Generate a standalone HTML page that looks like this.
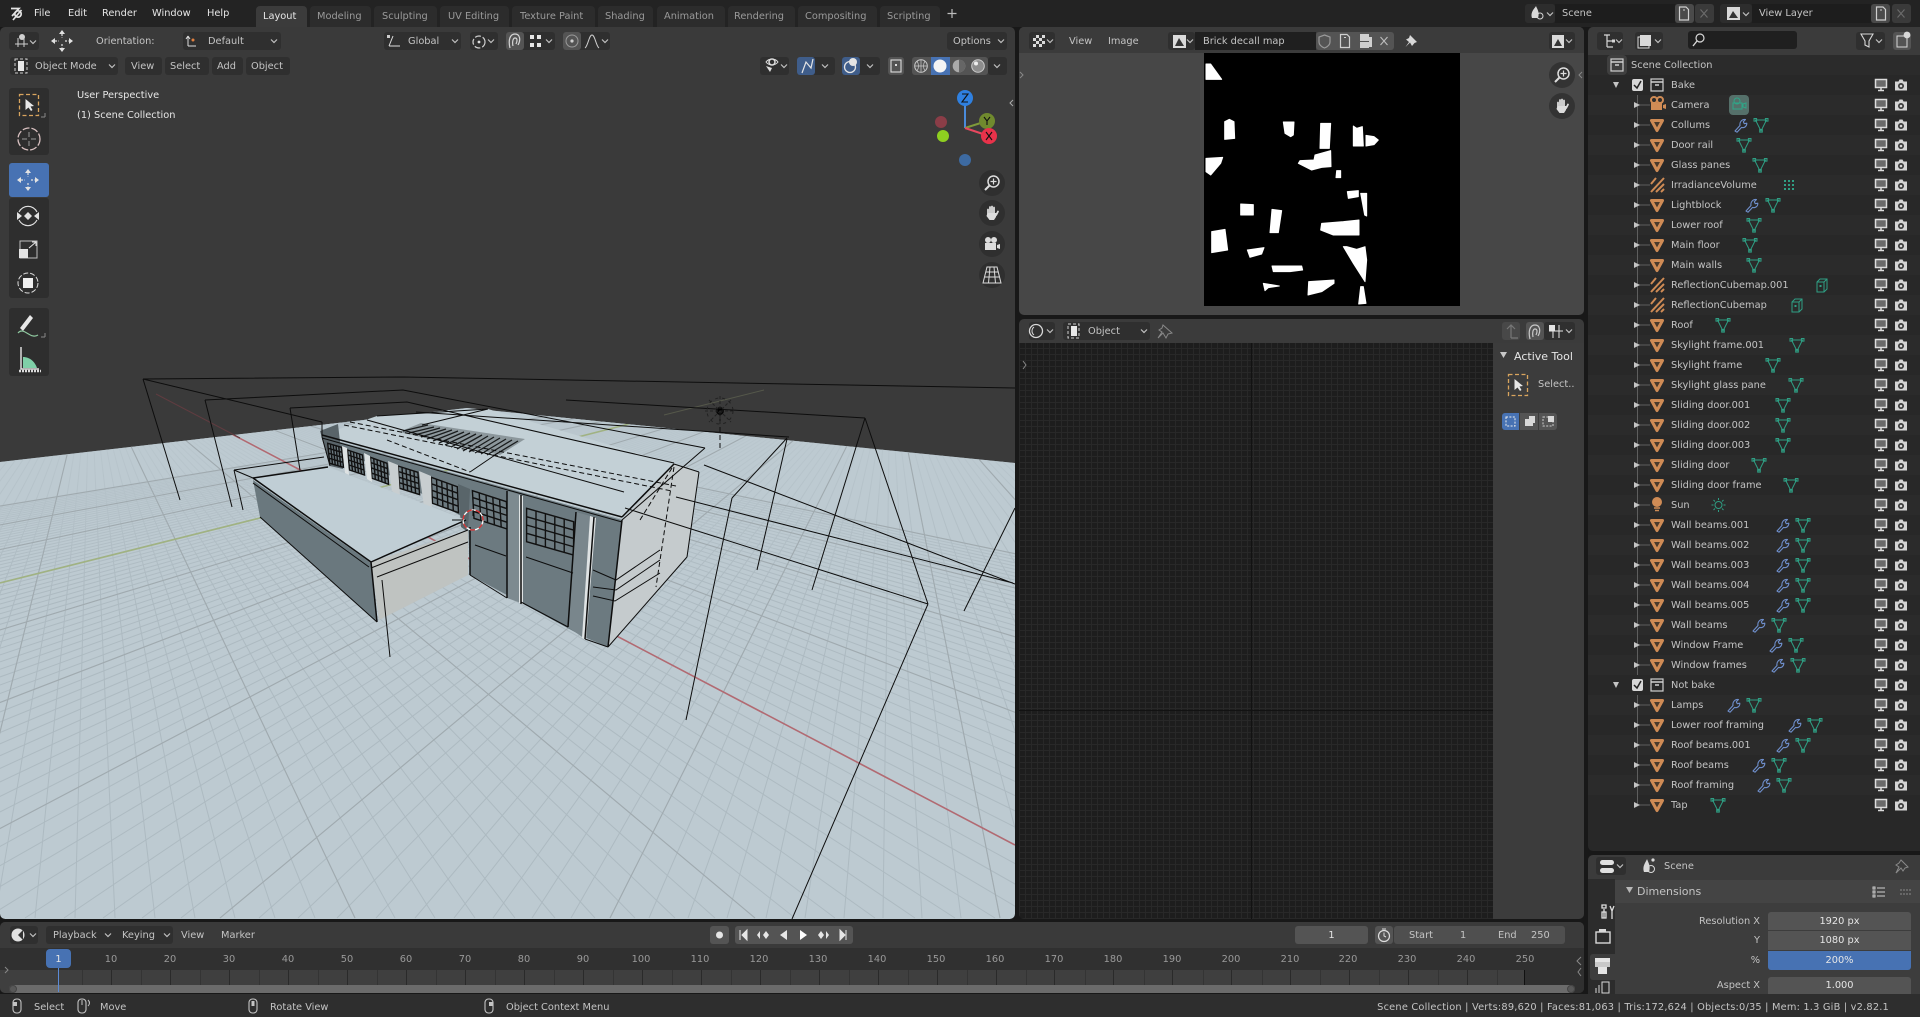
<!DOCTYPE html>
<html lang="en"><head><meta charset="utf-8"><title>Blender</title>
<style>
html,body{margin:0;padding:0;background:#181818;width:1920px;height:1017px;overflow:hidden}
.a{position:absolute}
.t{position:absolute;white-space:nowrap;font:9.8px/14px "DejaVu Sans","Liberation Sans",sans-serif;color:#c4c4c4;margin-top:1px}
.w{color:#e6e6e6}
.d{color:#9a9a9a}
.b{position:absolute;background:#2f2f2f;border-radius:3px}
.f{position:absolute;background:#545454;border-radius:3px}
.tab{position:absolute;top:6px;height:21px;background:#2c2c2c;border-radius:4px 4px 0 0}
.c{text-align:center}
.r{text-align:right}
svg{position:absolute;left:0;top:0;overflow:hidden}
</style></head>
<body>
<div class="a" style="left:0;top:0;width:1920px;height:27px;background:#232323"></div>

<!-- areas -->
<div class="a" style="left:0;top:27px;width:1015px;height:892px;background:#3a3a3a;border-radius:5px"></div>
<div class="a" style="left:1019px;top:27px;width:565px;height:288px;background:#474747;border-radius:5px"></div>
<div class="a" style="left:1019px;top:27px;width:565px;height:26px;background:#3b3b3b;border-radius:5px 5px 0 0"></div>
<div class="a" style="left:1019px;top:319px;width:565px;height:600px;background:#1d1d1d;border-radius:5px;overflow:hidden">
  <div class="a" style="left:0;top:24px;width:474px;height:576px;background-color:#1d1d1d;background-image:repeating-linear-gradient(90deg,#282828 0 1px,transparent 1px 6px),repeating-linear-gradient(0deg,#282828 0 1px,transparent 1px 6px)"></div>
  <div class="a" style="left:232px;top:24px;width:1px;height:576px;background:#121212"></div>
  <div class="a" style="left:0;top:391px;width:474px;height:1px;background:#121212"></div>
  <div class="a" style="left:474px;top:24px;width:91px;height:576px;background:#3c3c3c"></div>
  <div class="a" style="left:0;top:0;width:565px;height:24px;background:#3b3b3b"></div>
</div>
<div class="a" style="left:1588px;top:27px;width:332px;height:824px;background:#282828;border-radius:5px 0 0 5px;overflow:hidden">
  <div class="a" style="left:0;top:0;width:332px;height:28px;background:#3b3b3b"></div>
  <div class="a" style="left:0;top:28px;width:332px;height:760px;background:repeating-linear-gradient(180deg,#2b2b2b 0 20px,#282828 20px 40px)"></div>
</div>
<div class="a" style="left:1588px;top:855px;width:332px;height:139px;background:#3b3b3b;border-radius:5px 0 0 0;overflow:hidden">
  <div class="a" style="left:0;top:24px;width:27px;height:115px;background:#2c2c2c"></div>
  <div class="a" style="left:27px;top:25px;width:305px;height:23px;background:#444"></div>
  <div class="a" style="left:27px;top:48px;width:305px;height:91px;background:#3d3d3d"></div>
</div>
<div class="a" style="left:0;top:922px;width:1584px;height:71px;background:#2f2f2f;border-radius:5px;overflow:hidden">
  <div class="a" style="left:0;top:0;width:1584px;height:26px;background:#3a3a3a"></div>
  <div class="a" style="left:0;top:26px;width:1584px;height:22px;background:#303030"></div>
  <div class="a" style="left:0;top:48px;width:1584px;height:23px;background:#3f3f3f"></div>
  <div class="a" style="left:1524px;top:48px;width:60px;height:23px;background:#303030"></div>
  <div class="a" style="left:9px;top:63px;width:1566px;height:8px;background:#6b6b6b;border-radius:4px"></div>
</div>
<div class="a" style="left:0;top:994px;width:1920px;height:23px;background:#2e2e2e"></div>

<!-- 3D viewport scene -->
<svg width="1015" height="919" viewBox="0 0 1015 919" style="border-radius:0 0 5px 5px">
<defs>
<clipPath id="vp"><rect x="0" y="27" width="1015" height="892" rx="5"/></clipPath>
<clipPath id="fl"><polygon points="0,462 467,408 1015,463 1015,919 0,919"/></clipPath>
<linearGradient id="fade" x1="0" y1="440" x2="0" y2="590" gradientUnits="userSpaceOnUse"><stop offset="0" stop-color="#bdcad1" stop-opacity=".75"/><stop offset="1" stop-color="#bdcad1" stop-opacity="0"/></linearGradient>
<g id="win"><rect x="0" y="0" width="1" height="1" fill="#6c7a80"/><path d="M0 0H1V1H0ZM.2 0V1M.4 0V1M.6 0V1M.8 0V1M0 .25H1M0 .5H1M0 .75H1" fill="none" stroke="#111" stroke-width="1.4" vector-effect="non-scaling-stroke"/></g>
</defs>
<g clip-path="url(#vp)">
<path d="M664 415L764 390" stroke="#55584a" stroke-width="1" fill="none"/>
<polygon points="0,462 467,408 1015,463 1015,919 0,919" fill="#bdcad1"/>
<g clip-path="url(#fl)" fill="none">
<path stroke="#adbac1" stroke-width="1" d="M90 360L-445 918M90 360L-405 918M90 360L-365 918M90 360L-325 918M90 360L-285 918M90 360L-245 918M90 360L-205 918M90 360L-165 918M90 360L-125 918M90 360L-85 918M90 360L-45 918M90 360L-5 918M90 360L35 918M90 360L75 918M90 360L115 918M90 360L155 918M90 360L195 918M90 360L235 918M90 360L275 918M90 360L315 918M90 360L355 918M90 360L395 918M90 360L435 918M90 360L475 918M90 360L515 918M90 360L555 918M90 360L595 918M90 360L635 918M90 360L675 918M90 360L715 918M90 360L755 918M90 360L795 918M90 360L835 918M90 360L875 918M90 360L915 918M90 360L955 918M90 360L995 918M90 360L1035 918M90 360L1075 918M90 360L1115 918M90 360L1155 918M90 360L1195 918M90 360L1235 918M90 360L1275 918M90 360L1315 918M90 360L1355 918M90 360L1395 918M90 360L1435 918M90 360L1475 918M90 360L1515 918M90 360L1555 918M90 360L1595 918M90 360L1635 918M90 360L1675 918M90 360L1715 918M90 360L1755 918M90 360L1795 918M90 360L1835 918M90 360L1875 918M90 360L1915 918M90 360L1955 918M90 360L1995 918M90 360L2035 918M90 360L2075 918M90 360L2115 918M90 360L2155 918M90 360L2195 918M90 360L2235 918M90 360L2275 918M90 360L2315 918M90 360L2355 918M90 360L2395 918M90 360L2435 918M90 360L2475 918M90 360L2515 918M90 360L2555 918M90 360L2595 918M90 360L2635 918M90 360L2675 918M90 360L2715 918M90 360L2755 918"/>
<path stroke="#adbac1" stroke-width="1" d="M890 360L-2510 918M890 360L-2471 918M890 360L-2432 918M890 360L-2393 918M890 360L-2354 918M890 360L-2315 918M890 360L-2276 918M890 360L-2237 918M890 360L-2198 918M890 360L-2159 918M890 360L-2120 918M890 360L-2081 918M890 360L-2042 918M890 360L-2003 918M890 360L-1964 918M890 360L-1925 918M890 360L-1886 918M890 360L-1847 918M890 360L-1808 918M890 360L-1769 918M890 360L-1730 918M890 360L-1691 918M890 360L-1652 918M890 360L-1613 918M890 360L-1574 918M890 360L-1535 918M890 360L-1496 918M890 360L-1457 918M890 360L-1418 918M890 360L-1379 918M890 360L-1340 918M890 360L-1301 918M890 360L-1262 918M890 360L-1223 918M890 360L-1184 918M890 360L-1145 918M890 360L-1106 918M890 360L-1067 918M890 360L-1028 918M890 360L-989 918M890 360L-950 918M890 360L-911 918M890 360L-872 918M890 360L-833 918M890 360L-794 918M890 360L-755 918M890 360L-716 918M890 360L-677 918M890 360L-638 918M890 360L-599 918M890 360L-560 918M890 360L-521 918M890 360L-482 918M890 360L-443 918M890 360L-404 918M890 360L-365 918M890 360L-326 918M890 360L-287 918M890 360L-248 918M890 360L-209 918M890 360L-170 918M890 360L-131 918M890 360L-92 918M890 360L-53 918M890 360L-14 918M890 360L25 918M890 360L64 918M890 360L103 918M890 360L142 918M890 360L181 918M890 360L220 918M890 360L259 918M890 360L298 918M890 360L337 918M890 360L376 918M890 360L415 918M890 360L454 918M890 360L493 918M890 360L532 918M890 360L571 918M890 360L610 918M890 360L649 918M890 360L688 918M890 360L727 918M890 360L766 918M890 360L805 918M890 360L844 918M890 360L883 918M890 360L922 918M890 360L961 918M890 360L1000 918M890 360L1039 918M890 360L1078 918M890 360L1117 918M890 360L1156 918M890 360L1195 918M890 360L1234 918M890 360L1273 918M890 360L1312 918M890 360L1351 918M890 360L1390 918M890 360L1429 918M890 360L1468 918M890 360L1507 918M890 360L1546 918M890 360L1585 918M890 360L1624 918"/>
<rect x="0" y="400" width="1015" height="240" fill="url(#fade)"/>
<path stroke="#a0aaaf" stroke-width="1.1" d="M90 360L-445 918M90 360L-45 918M90 360L355 918M90 360L755 918M90 360L1555 918M90 360L1955 918M90 360L2355 918M90 360L2755 918M890 360L-2510 918M890 360L-2120 918M890 360L-1730 918M890 360L-950 918M890 360L-560 918M890 360L-170 918M890 360L220 918M890 360L610 918M890 360L1000 918M890 360L1390 918"/>
<path stroke="#a0b282" stroke-width="1.6" d="M0 583L260 518L664 415"/>
<path stroke="#b26a72" stroke-width="1.6" d="M163 398L1015 845"/>
</g>
<path stroke="#5f3c40" stroke-width="1" fill="none" d="M156 394L240 438"/>

<!-- building -->
<polygon points="322,437 622,520 608,647 584,637 470,575 468,520" fill="#6c7a80"/>
<polygon points="622,520 674,464 699,472 687,557 608,647" fill="#c5cbcd"/>
<polygon points="322,435 377,416 488,409 674,464 622,519" fill="#c3d0d6"/>
<polygon points="320,431 338,424 343,469 330,466" fill="#596469"/>
<polygon points="399,432 421,423 525,439 500,455" fill="#8c979c"/>
<path d="M403 431L428 425M409 433L434 427M415 435L440 428M421 437L446 429M427 439L452 430M433 441L458 431M439 443L464 432M445 445L470 433M451 447L476 434M457 449L482 435M463 451L488 436M469 452L494 437M475 453L500 438M481 454L506 439M487 455L512 440M493 456L518 441" stroke="#1a1d1e" stroke-width="1.3" fill="none"/>
<use href="#win" transform="matrix(13.8 4 2 20 327.7 443.3)"/>
<use href="#win" transform="matrix(15 5 2 20 347.5 450)"/>
<use href="#win" transform="matrix(16.6 6 1.6 21 370.4 457.3)"/>
<use href="#win" transform="matrix(19.9 6.3 1.7 22.3 398 466)"/>
<use href="#win" transform="matrix(26 9.4 1.2 26 431.3 477.3)"/>
<use href="#win" transform="matrix(34 11 1.6 27.6 472.4 490.7)"/>
<use href="#win" transform="matrix(47 13.4 0 33.4 526.6 508.3)"/>
<polygon points="342,446 347,448 349,475 345,473" fill="#dde2e3"/>
<polygon points="364,453 370,456 372,482 367,479" fill="#dde2e3"/>
<polygon points="388,461 398,465 400,497 392,491" fill="#c8ced0"/>
<polygon points="419,471 431,476 432,512 424,507" fill="#c8ced0"/>
<polygon points="458,484 470,489 468,532 461,527" fill="#59656a"/>
<polygon points="507,491 521,495 521,603 507,598" fill="#7d8a90"/>
<polygon points="519,495 523,496 523,604 519,603" fill="#dfe3e4"/>
<polygon points="576,512 594,517 585,639 568,627" fill="#79868c"/>
<polygon points="590,516 596,518 586,640 582,638" fill="#dfe3e4"/>
<polygon points="253,480 371,563 377,622 260,517" fill="#6a787e"/>
<polygon points="371,562 468,530 468,575 379,620" fill="#bfc3c1"/>
<polygon points="253,478 328,467 466,520 371,562" fill="#c0ced5"/>

<!-- outlines -->
<g fill="none" stroke="#0d0d0d">
<path stroke-width="1.5" d="M322 435L622 517M622 517L674 464M622 520L608 647M253 478L371 562M371 562L466 520M328 467L253 478M371 562L377 622M470 527V575M507 491V598M521 495V604M576 512L568 627M594 517L585 639"/>
<path stroke-width="1" d="M322 438L622 522M367 420L624 492M253 483L369 567M371 568L468 530M377 577L468 542M377 622L260 517M470 575L507 598M521 602L568 627M585 639L608 647M608 647L687 557M687 557L699 472M674 464L699 472M322 422L322 437M322 437L330 466M593 570L616 580L660 550M593 587L616 590L660 560M593 596L615 601L660 573M526 557L573 573M475 545L506 556M422 425L488 409M377 416L488 409"/>
<path stroke-width="1" d="M143 379L403 377L1015 388M143 379L322 422M143 379L180 500M205 400L403 390L705 448M205 400L232 507M290 408L407 402L674 463M290 408L300 470M234 470L324 457M234 470L243 510M234 470L253 478M382 580L390 657M470 472L498 453M416 412L789 437M566 400L865 418M865 418L928 604M928 604L792 919M865 418L812 590M787 439L757 570M732 498L686 720M1015 508L964 611M625 508L928 604M704 465L1015 584M676 497L1013 583M787 438L732 498M705 448L622 520"/>
<path stroke-width="1" stroke-dasharray="5 3" d="M344 425L672 491M350 422L676 486M674 467L656 587M387 440L470 472M720 411V450M672 468L640 520"/>
<circle cx="473" cy="520" r="10" stroke="#fff" stroke-width="1.3" stroke-dasharray="5 4"/>
<circle cx="473" cy="520" r="10" stroke="#d33" stroke-width="1.3" stroke-dasharray="5 4" stroke-dashoffset="4.5"/>
<path stroke-width="1" d="M463 520H452M473 510V516"/>
<circle cx="720" cy="411" r="3.5" fill="#000"/>
<path stroke="#222" stroke-width="1" stroke-dasharray="3 2" d="M720 396V426M705 411H735M709 400L731 422M731 400L709 422"/>
<circle cx="720" cy="411" r="13" stroke="#222" stroke-width="1" stroke-dasharray="3 4"/>
</g>
</g>
</svg>

<!-- decal image -->
<div class="a" style="left:1204px;top:53px;width:256px;height:253px;background:#000"></div>
<svg width="1920" height="1017">
<g transform="translate(1190 50) scale(.33333)" fill="#fff" stroke="#fff" stroke-width="3" stroke-linejoin="round">
<polygon points="48,42 62,42 95,88 48,88"/><polygon points="104,215 118,208 132,215 134,265 104,268"/><polygon points="280,216 312,216 310,255 302,260 285,250"/><polygon points="392,220 422,220 418,295 390,295"/><polygon points="490,228 500,235 517,230 520,288 490,288"/><polygon points="528,256 552,260 565,270 552,284 528,288"/><polygon points="48,325 98,322 92,340 62,375 48,365"/><polygon points="375,315 422,302 423,350 395,352 365,360 325,340 330,332 372,330"/><polygon points="440,362 452,362 452,383 438,383"/><polygon points="472,425 505,422 505,440 475,445"/><polygon points="512,430 530,430 530,498 524,495"/><polygon points="152,462 190,464 190,495 152,495"/><polygon points="246,478 275,482 265,548 240,548"/><polygon points="395,520 460,515 507,510 507,555 430,555 392,540"/><polygon points="65,545 105,538 113,600 65,608"/><polygon points="172,600 222,593 215,612 180,622"/><polygon points="460,590 470,590 500,598 525,590 530,630 525,695 490,640"/><polygon points="246,648 335,648 338,660 300,665 250,665"/><polygon points="220,700 232,702 268,708 235,713 225,722"/><polygon points="356,695 432,690 432,700 395,725 354,735"/><polygon points="512,710 520,710 528,760 506,762"/>
</g>
</svg>

<!-- top bar -->
<div class="t w" style="left:34px;top:6px">File</div>
<div class="t w" style="left:68px;top:6px">Edit</div>
<div class="t w" style="left:102px;top:6px">Render</div>
<div class="t w" style="left:152px;top:6px">Window</div>
<div class="t w" style="left:207px;top:6px">Help</div>
<div class="tab" style="left:256px;width:51px;background:#3b3b3b"></div>
<div class="tab" style="left:310px;width:61px"></div>
<div class="tab" style="left:374px;width:63px"></div>
<div class="tab" style="left:440px;width:69px"></div>
<div class="tab" style="left:512px;width:83px"></div>
<div class="tab" style="left:598px;width:55px"></div>
<div class="tab" style="left:657px;width:68px"></div>
<div class="tab" style="left:728px;width:67px"></div>
<div class="tab" style="left:798px;width:79px"></div>
<div class="tab" style="left:880px;width:60px"></div>
<div class="t w" style="left:263px;top:9px">Layout</div>
<div class="t d" style="left:317px;top:9px">Modeling</div>
<div class="t d" style="left:382px;top:9px">Sculpting</div>
<div class="t d" style="left:448px;top:9px">UV Editing</div>
<div class="t d" style="left:520px;top:9px">Texture Paint</div>
<div class="t d" style="left:605px;top:9px">Shading</div>
<div class="t d" style="left:664px;top:9px">Animation</div>
<div class="t d" style="left:734px;top:9px">Rendering</div>
<div class="t d" style="left:805px;top:9px">Compositing</div>
<div class="t d" style="left:887px;top:9px">Scripting</div>
<div class="b" style="left:1525px;top:4px;width:30px;height:19px;background:#2d2d2d"></div>
<div class="a" style="left:1555px;top:4px;width:120px;height:19px;background:#1d1d1d"></div>
<div class="f" style="left:1675px;top:4px;width:19px;height:19px;background:#4a4a4a"></div>
<div class="f" style="left:1695px;top:4px;width:19px;height:19px;background:#3a3a3a"></div>
<div class="t" style="left:1562px;top:6px">Scene</div>
<div class="b" style="left:1720px;top:4px;width:32px;height:19px;background:#2d2d2d"></div>
<div class="a" style="left:1752px;top:4px;width:119px;height:19px;background:#1d1d1d"></div>
<div class="f" style="left:1871px;top:4px;width:19px;height:19px;background:#4a4a4a"></div>
<div class="f" style="left:1892px;top:4px;width:19px;height:19px;background:#3a3a3a"></div>
<div class="t" style="left:1759px;top:6px">View Layer</div>

<!-- viewport headers -->
<div class="b" style="left:9px;top:32px;width:30px;height:18px"></div>
<div class="t" style="left:96px;top:34px">Orientation:</div>
<div class="b" style="left:183px;top:32px;width:98px;height:18px"></div>
<div class="t" style="left:208px;top:34px">Default</div>
<div class="b" style="left:384px;top:32px;width:77px;height:18px"></div>
<div class="t" style="left:408px;top:34px">Global</div>
<div class="b" style="left:470px;top:32px;width:28px;height:18px"></div>
<div class="b" style="left:506px;top:32px;width:49px;height:18px"></div>
<div class="f" style="left:506px;top:32px;width:18px;height:18px"></div>
<div class="b" style="left:563px;top:32px;width:47px;height:18px"></div>
<div class="f" style="left:563px;top:32px;width:18px;height:18px"></div>
<div class="b" style="left:947px;top:32px;width:60px;height:18px"></div>
<div class="t" style="left:953px;top:34px">Options</div>
<div class="b" style="left:10px;top:57px;width:108px;height:18px"></div>
<div class="t" style="left:35px;top:59px">Object Mode</div>
<div class="b" style="left:125px;top:57px;width:37px;height:18px"></div>
<div class="b" style="left:165px;top:57px;width:44px;height:18px"></div>
<div class="b" style="left:212px;top:57px;width:31px;height:18px"></div>
<div class="b" style="left:246px;top:57px;width:44px;height:18px"></div>
<div class="t" style="left:131px;top:59px">View</div>
<div class="t" style="left:170px;top:59px">Select</div>
<div class="t" style="left:217px;top:59px">Add</div>
<div class="t" style="left:251px;top:59px">Object</div>
<div class="b" style="left:760px;top:57px;width:29px;height:18px"></div>
<div class="b" style="left:797px;top:57px;width:38px;height:18px"></div>
<div class="a" style="left:797px;top:57px;width:18px;height:18px;background:#3f5d8a;border-radius:3px"></div>
<div class="b" style="left:842px;top:57px;width:38px;height:18px"></div>
<div class="a" style="left:842px;top:57px;width:18px;height:18px;background:#3f5d8a;border-radius:3px"></div>
<div class="f" style="left:888px;top:57px;width:16px;height:18px"></div>
<div class="f" style="left:912px;top:57px;width:76px;height:18px"></div>
<div class="a" style="left:931px;top:57px;width:19px;height:18px;background:#4772b3"></div>
<div class="b" style="left:988px;top:57px;width:19px;height:18px"></div>
<div class="t w" style="left:77px;top:88px">User Perspective</div>
<div class="t w" style="left:77px;top:108px">(1) Scene Collection</div>

<!-- toolbar -->
<div class="b" style="left:9px;top:88px;width:40px;height:67px;background:#2e2e2e"></div>
<div class="a" style="left:9px;top:163px;width:40px;height:34px;background:#4772b3;border-radius:3px"></div>
<div class="b" style="left:9px;top:198px;width:40px;height:100px;background:#2e2e2e"></div>
<div class="b" style="left:9px;top:308px;width:40px;height:68px;background:#2e2e2e"></div>

<!-- image editor header -->
<div class="b" style="left:1029px;top:32px;width:26px;height:18px"></div>
<div class="t" style="left:1069px;top:34px">View</div>
<div class="t" style="left:1108px;top:34px">Image</div>
<div class="b" style="left:1168px;top:32px;width:27px;height:18px"></div>
<div class="a" style="left:1195px;top:32px;width:121px;height:18px;background:#1f1f1f"></div>
<div class="t" style="left:1203px;top:34px">Brick decall map</div>
<div class="f" style="left:1316px;top:32px;width:78px;height:18px"></div>
<div class="b" style="left:1549px;top:32px;width:26px;height:18px"></div>

<!-- node editor header -->
<div class="b" style="left:1029px;top:322px;width:26px;height:18px"></div>
<div class="b" style="left:1063px;top:322px;width:87px;height:18px"></div>
<div class="t" style="left:1088px;top:324px">Object</div>
<div class="f" style="left:1502px;top:322px;width:18px;height:18px;background:#484848"></div>
<div class="f" style="left:1526px;top:322px;width:18px;height:18px"></div>
<div class="b" style="left:1544px;top:322px;width:31px;height:18px"></div>
<div class="t w" style="left:1514px;top:349px;width:66px;overflow:hidden;font-size:11px">Active Tool</div>
<div class="t" style="left:1538px;top:377px">Select..</div>
<div class="a" style="left:1502px;top:413px;width:17px;height:17px;background:#4772b3;border-radius:3px 0 0 3px"></div>
<div class="f" style="left:1520px;top:413px;width:18px;height:17px;border-radius:0"></div>
<div class="f" style="left:1539px;top:413px;width:18px;height:17px;border-radius:0 3px 3px 0"></div>

<!-- outliner -->
<div class="b" style="left:1597px;top:32px;width:26px;height:18px"></div>
<div class="b" style="left:1635px;top:32px;width:28px;height:18px"></div>
<div class="a" style="left:1688px;top:31px;width:109px;height:18px;background:#1f1f1f;border-radius:3px"></div>
<div class="b" style="left:1856px;top:32px;width:29px;height:18px"></div>
<div class="f" style="left:1893px;top:32px;width:18px;height:18px"></div>
<div class="a" style="left:1607px;top:55px;width:20px;height:20px;background:#3f3f3f;border-radius:4px"></div>
<div class="a" style="left:1729px;top:95px;width:20px;height:20px;background:#55706a;border-radius:4px"></div>
<div class="t" style="left:1631px;top:58px">Scene Collection</div>
<div class="t" style="left:1671px;top:78px">Bake</div>
<div class="t" style="left:1671px;top:98px">Camera</div>
<div class="t" style="left:1671px;top:118px">Collums</div>
<div class="t" style="left:1671px;top:138px">Door rail</div>
<div class="t" style="left:1671px;top:158px">Glass panes</div>
<div class="t" style="left:1671px;top:178px">IrradianceVolume</div>
<div class="t" style="left:1671px;top:198px">Lightblock</div>
<div class="t" style="left:1671px;top:218px">Lower roof</div>
<div class="t" style="left:1671px;top:238px">Main floor</div>
<div class="t" style="left:1671px;top:258px">Main walls</div>
<div class="t" style="left:1671px;top:278px">ReflectionCubemap.001</div>
<div class="t" style="left:1671px;top:298px">ReflectionCubemap</div>
<div class="t" style="left:1671px;top:318px">Roof</div>
<div class="t" style="left:1671px;top:338px">Skylight frame.001</div>
<div class="t" style="left:1671px;top:358px">Skylight frame</div>
<div class="t" style="left:1671px;top:378px">Skylight glass pane</div>
<div class="t" style="left:1671px;top:398px">Sliding door.001</div>
<div class="t" style="left:1671px;top:418px">Sliding door.002</div>
<div class="t" style="left:1671px;top:438px">Sliding door.003</div>
<div class="t" style="left:1671px;top:458px">Sliding door</div>
<div class="t" style="left:1671px;top:478px">Sliding door frame</div>
<div class="t" style="left:1671px;top:498px">Sun</div>
<div class="t" style="left:1671px;top:518px">Wall beams.001</div>
<div class="t" style="left:1671px;top:538px">Wall beams.002</div>
<div class="t" style="left:1671px;top:558px">Wall beams.003</div>
<div class="t" style="left:1671px;top:578px">Wall beams.004</div>
<div class="t" style="left:1671px;top:598px">Wall beams.005</div>
<div class="t" style="left:1671px;top:618px">Wall beams</div>
<div class="t" style="left:1671px;top:638px">Window Frame</div>
<div class="t" style="left:1671px;top:658px">Window frames</div>
<div class="t" style="left:1671px;top:678px">Not bake</div>
<div class="t" style="left:1671px;top:698px">Lamps</div>
<div class="t" style="left:1671px;top:718px">Lower roof framing</div>
<div class="t" style="left:1671px;top:738px">Roof beams.001</div>
<div class="t" style="left:1671px;top:758px">Roof beams</div>
<div class="t" style="left:1671px;top:778px">Roof framing</div>
<div class="t" style="left:1671px;top:798px">Tap</div>

<!-- properties -->
<div class="b" style="left:1596px;top:857px;width:30px;height:18px"></div>
<div class="t" style="left:1664px;top:859px">Scene</div>
<div class="t" style="left:1637px;top:884px;font-size:11px">Dimensions</div>
<div class="t r" style="left:1660px;top:914px;width:100px">Resolution X</div>
<div class="t r" style="left:1660px;top:933px;width:100px">Y</div>
<div class="t r" style="left:1660px;top:953px;width:100px">%</div>
<div class="t r" style="left:1660px;top:978px;width:100px">Aspect X</div>
<div class="f" style="left:1768px;top:912px;width:143px;height:18px;border-radius:3px 3px 0 0"></div>
<div class="f" style="left:1768px;top:931px;width:143px;height:19px;border-radius:0"></div>
<div class="a" style="left:1768px;top:951px;width:143px;height:19px;background:#4772b3;border-radius:0 0 3px 3px"></div>
<div class="f" style="left:1768px;top:977px;width:143px;height:17px;border-radius:3px 3px 0 0"></div>
<div class="t w c" style="left:1768px;top:914px;width:143px">1920 px</div>
<div class="t w c" style="left:1768px;top:933px;width:143px">1080 px</div>
<div class="t w c" style="left:1768px;top:953px;width:143px">200%</div>
<div class="t w c" style="left:1768px;top:978px;width:143px">1.000</div>
<div class="a" style="left:1590px;top:954px;width:25px;height:26px;background:#3d3d3d;border-radius:3px 0 0 3px"></div>

<!-- timeline -->
<div class="b" style="left:10px;top:926px;width:28px;height:18px"></div>
<div class="b" style="left:46px;top:926px;width:127px;height:18px"></div>
<div class="t" style="left:53px;top:928px">Playback</div>
<div class="t" style="left:122px;top:928px">Keying</div>
<div class="t" style="left:181px;top:928px">View</div>
<div class="t" style="left:221px;top:928px">Marker</div>
<div class="f" style="left:710px;top:926px;width:19px;height:18px"></div>
<div class="f" style="left:735px;top:926px;width:118px;height:18px"></div>
<div class="f" style="left:1295px;top:926px;width:73px;height:18px"></div>
<div class="t w c" style="left:1295px;top:928px;width:73px">1</div>
<div class="f" style="left:1375px;top:926px;width:18px;height:18px"></div>
<div class="f" style="left:1394px;top:926px;width:171px;height:18px;background:#4f4f4f"></div>
<div class="t" style="left:1409px;top:928px">Start</div>
<div class="t" style="left:1460px;top:928px">1</div>
<div class="t" style="left:1498px;top:928px">End</div>
<div class="t" style="left:1531px;top:928px">250</div>
<div class="a" style="left:46px;top:949px;width:25px;height:19px;background:#4772b3;border-radius:4px"></div>
<div class="t w c" style="left:46px;top:952px;width:25px">1</div>
<div class="t d c" style="left:96px;top:952px;width:30px">10</div>
<div class="t d c" style="left:155px;top:952px;width:30px">20</div>
<div class="t d c" style="left:214px;top:952px;width:30px">30</div>
<div class="t d c" style="left:273px;top:952px;width:30px">40</div>
<div class="t d c" style="left:332px;top:952px;width:30px">50</div>
<div class="t d c" style="left:391px;top:952px;width:30px">60</div>
<div class="t d c" style="left:450px;top:952px;width:30px">70</div>
<div class="t d c" style="left:509px;top:952px;width:30px">80</div>
<div class="t d c" style="left:568px;top:952px;width:30px">90</div>
<div class="t d c" style="left:626px;top:952px;width:30px">100</div>
<div class="t d c" style="left:685px;top:952px;width:30px">110</div>
<div class="t d c" style="left:744px;top:952px;width:30px">120</div>
<div class="t d c" style="left:803px;top:952px;width:30px">130</div>
<div class="t d c" style="left:862px;top:952px;width:30px">140</div>
<div class="t d c" style="left:921px;top:952px;width:30px">150</div>
<div class="t d c" style="left:980px;top:952px;width:30px">160</div>
<div class="t d c" style="left:1039px;top:952px;width:30px">170</div>
<div class="t d c" style="left:1098px;top:952px;width:30px">180</div>
<div class="t d c" style="left:1157px;top:952px;width:30px">190</div>
<div class="t d c" style="left:1216px;top:952px;width:30px">200</div>
<div class="t d c" style="left:1275px;top:952px;width:30px">210</div>
<div class="t d c" style="left:1333px;top:952px;width:30px">220</div>
<div class="t d c" style="left:1392px;top:952px;width:30px">230</div>
<div class="t d c" style="left:1451px;top:952px;width:30px">240</div>
<div class="t d c" style="left:1510px;top:952px;width:30px">250</div>

<!-- status bar -->
<div class="t" style="left:34px;top:1000px">Select</div>
<div class="t" style="left:100px;top:1000px">Move</div>
<div class="t" style="left:270px;top:1000px">Rotate View</div>
<div class="t" style="left:506px;top:1000px">Object Context Menu</div>
<div class="t r" style="left:1289px;top:1000px;width:600px;letter-spacing:.2px">Scene Collection | Verts:89,620 | Faces:81,063 | Tris:172,624 | Objects:0/35 | Mem: 1.3 GiB | v2.82.1</div>

<!-- icon layer -->
<svg width="1920" height="1017">
<defs>
<g id="ch"><path d="M-3 -1.5L0 1.5L3 -1.5" fill="none" stroke="#c0c0c0" stroke-width="1.2"/></g>
<g id="o"><path d="M-5.5 -4.500H5.500L0 5.500Z" fill="#4a3a2c" stroke="#cf8b55" stroke-width="3" stroke-linejoin="round"/></g>
<g id="m"><path d="M-5.500 -5H5.500L0 6Z" fill="none" stroke="#2f9f84" stroke-width="1"/><path d="M-7 -6.500h2.600v2.600h-2.600zM4.400 -6.500h2.600v2.600h-2.600zM-1.300 4.500h2.600v2.600h-2.600z" fill="none" stroke="#2f9f84" stroke-width="1"/></g>
<g id="k"><path d="M-6 6L-1 0.5C-1.6 -2.5 0.5 -6 4.5 -5.5L2.3 -3.2L3.3 -1.3L5.8 -1.8C6 1.5 3 3.3 0.6 2.4L-4 7.2Z" fill="none" stroke="#6f8fcc" stroke-width="1.1" stroke-linejoin="round"/></g>
<g id="v"><rect x="-5.5" y="-5.5" width="11" height="8" fill="#6a6a6a" stroke="#dcdcdc" stroke-width="1.5"/><path d="M0 3V5M-3 5.5H3" stroke="#dcdcdc" stroke-width="1.5"/></g>
<g id="r"><path d="M-6 -3.5H-2.5L-1.5 -5.5H1.5L2.5 -3.5H6V5.5H-6Z" fill="#d4d4d4"/><circle cx="0" cy="1" r="3" fill="#3a3a3a"/><circle cx="0" cy="1" r="1.3" fill="#d4d4d4"/></g>
<g id="cl"><rect x="-6" y="-6" width="12" height="12" fill="none" stroke="#d0d0d0" stroke-width="1.2"/><path d="M-6 -3H6M-2 0H2" stroke="#d0d0d0" stroke-width="1.4"/></g>
<g id="h"><path d="M-4 1V-3.5M-2 1V-6M0 1V-6.5M2 1V-5.5M4.2 2L6 -1.5" stroke="#dcdcdc" stroke-width="1.8" stroke-linecap="round" fill="none"/><path d="M-4.5 0H4.8L4 4L2 7H-2.5L-5.5 3Z" fill="#dcdcdc"/></g>
<g id="z"><circle cx="1.5" cy="-1.5" r="5.5" fill="none" stroke="#dcdcdc" stroke-width="1.5"/><path d="M-2.5 2.5L-7 7" stroke="#dcdcdc" stroke-width="2"/><path d="M1.5 -4.5V1.5M-1.5 -1.5H4.5" stroke="#dcdcdc" stroke-width="1.2"/></g>
<g id="pin"><path d="M-1 -6L6 1L3.5 2L1 5L-1 1.5L-5.5 6L-2 1L-5 -1.5L-2 -3Z" fill="#d8d8d8"/></g>
<g id="cp"><path d="M-4.5 -6.5H2L4.5 -4V6.5H-4.5Z" fill="none" stroke="#cfcfcf" stroke-width="1.2"/><path d="M-1 -3.5H1" stroke="#cfcfcf"/></g>
<g id="x"><path d="M-3.5 -4L3.5 4M3.5 -4L-3.5 4" stroke="#bdbdbd" stroke-width="1.1"/></g>
<g id="xd"><path d="M-3.5 -4L3.5 4M3.5 -4L-3.5 4" stroke="#6c6c6c" stroke-width="1.1"/></g>
<g id="sel"><rect x="-9.5" y="-10.5" width="19" height="21" fill="none" stroke="#d9a55e" stroke-width="1.3" stroke-dasharray="4 2.5"/><path d="M-3.5 -6V5L-.5 2.5L2 6L3.5 5L1.5 1.5L5 1Z" fill="#e8e8e8"/></g>
<g id="mv"><path d="M0 -11L-3 -7H3ZM0 11L-3 7H3ZM-11 0L-7 -3V3ZM11 0L7 -3V3Z" fill="#e2e2e2"/><path d="M0 -7V-3M0 3V7M-7 0H-3M3 0H7" stroke="#e2e2e2" stroke-width="1.2" stroke-dasharray="2 1.5"/></g>
<g id="ms"><rect x="-4" y="-7" width="8" height="14" rx="3.5" fill="none" stroke="#c4c4c4" stroke-width="1.1"/></g>
</defs>

<g>
<!-- logo -->
<circle cx="18" cy="14" r="3.2" fill="none" stroke="#e4e4e4" stroke-width="1.7"/>
<path d="M12 16L19 8.5H11M21.5 10L13 20" stroke="#e4e4e4" stroke-width="1.7" fill="none"/>
<path d="M952 9V18M947.5 13.5H956.5" stroke="#bcbcbc" stroke-width="1.2"/>
<!-- scene tops -->
<path d="M1532 18C1530 12 1535 8 1536 6C1537 9 1540 12 1538 18Z" fill="#d8d8d8"/><circle cx="1540" cy="16" r="3" fill="none" stroke="#d8d8d8"/><use href="#ch" x="1550" y="14"/>
<use href="#cp" x="1684" y="13.5"/><use href="#xd" x="1704" y="13.5"/>
<rect x="1727" y="7" width="13" height="13" fill="#d8d8d8"/><path d="M1729 18L1733 11L1738 18Z" fill="#333"/><use href="#ch" x="1746" y="14"/>
<use href="#cp" x="1881" y="13.5"/><use href="#xd" x="1901" y="13.5"/>
<!-- tool header -->
<path d="M15 44H28M18 38V47M24 38V47" stroke="#cfcfcf"/><circle cx="22" cy="37" r="3" fill="#cfcfcf"/><use href="#ch" x="33" y="42"/>
<use href="#mv" x="62" y="41"/>
<path d="M188 46V36M188 36L186 39M188 36L190 39M188 46H196" stroke="#dcdcdc" fill="none"/><circle cx="193" cy="40" r="1.5" fill="#e08040"/><use href="#ch" x="274" y="41"/>
<path d="M389 46L393 36M389 46H400" stroke="#dcdcdc" fill="none"/><rect x="387" y="35" width="3" height="3" fill="#ccc"/><use href="#ch" x="455" y="41"/>
<circle cx="479" cy="42" r="6" fill="none" stroke="#d0d0d0" stroke-width="1.2" stroke-dasharray="6 2"/><circle cx="479" cy="42" r="1.4" fill="#ddd"/><use href="#ch" x="491" y="41"/>
<path d="M510 48C508 40 510 34 515 34C520 34 521 40 518 45M513 46C512 42 513 38 515 38C518 38 517 42 516 44" fill="none" stroke="#d4d4d4" stroke-width="1.2"/>
<path d="M530 35h4v4h-4zM537 35h4v4h-4zM530 43h4v4h-4zM537 43h4v4h-4z" fill="#e6e6e6"/><use href="#ch" x="549" y="41"/>
<circle cx="572" cy="41" r="6" fill="none" stroke="#9a9a9a"/><circle cx="572" cy="41" r="1.6" fill="#cfcfcf"/>
<path d="M585 48C588 46 589 35 592 35C595 35 596 46 599 48" fill="none" stroke="#cfcfcf"/><use href="#ch" x="605" y="41"/>
<use href="#ch" x="1001" y="41"/>
<!-- mode row -->
<rect x="15" y="59" width="12" height="14" fill="none" stroke="#cfcfcf" stroke-dasharray="3 2"/><rect x="18" y="61" width="6" height="10" fill="#e8e8e8"/><use href="#ch" x="112" y="66"/>
<circle cx="772" cy="62" r="3" fill="none" stroke="#ddd" stroke-width="1.5"/><path d="M766 62C769 58 775 58 778 62C775 66 769 66 766 62Z" fill="none" stroke="#ddd"/><path d="M766 66L770 72L772 68Z" fill="#ddd"/><use href="#ch" x="784" y="66"/>
<path d="M802 73L806 62L811 68L813 59" fill="none" stroke="#e4e4e4" stroke-width="1.2"/><use href="#ch" x="825" y="66"/>
<circle cx="850" cy="67" r="5.5" fill="none" stroke="#e4e4e4" stroke-width="1.3"/><circle cx="853" cy="62" r="4" fill="#e4e4e4"/><use href="#ch" x="870" y="66"/>
<rect x="891" y="60" width="10" height="12" fill="none" stroke="#ddd" stroke-width="1.1"/><rect x="895" y="64" width="2" height="2" fill="#ddd"/>
<circle cx="921" cy="66" r="6.3" fill="none" stroke="#ccc"/><path d="M915 66H927M921 60V72M917 61C919 64 919 68 917 71M925 61C923 64 923 68 925 71" stroke="#ccc" fill="none" stroke-width=".7"/>
<circle cx="940" cy="66" r="6.5" fill="#f4f4f4"/>
<circle cx="959" cy="66" r="6.3" fill="#aaa"/><path d="M959 59.7A6.3 6.3 0 0 1 959 72.3Z" fill="#666"/>
<circle cx="978" cy="66" r="6.3" fill="#8d8d8d" stroke="#ccc"/><circle cx="976" cy="63.5" r="2" fill="#eee"/>
<use href="#ch" x="997" y="66"/>
<!-- gizmo -->
<path d="M965 128V98" stroke="#4a8bdb" stroke-width="2"/><path d="M965 128L987 121" stroke="#7f9a3a" stroke-width="2"/><path d="M965 128L989 136" stroke="#e8485f" stroke-width="2"/>
<circle cx="941" cy="122" r="6" fill="#8a3d47"/><circle cx="943" cy="136" r="6" fill="#8ecf20"/><circle cx="965" cy="160" r="6" fill="#3d6aa1"/>
<circle cx="965" cy="98" r="8" fill="#2f80e0"/><circle cx="987" cy="121" r="8" fill="#708a2e"/><circle cx="989" cy="136" r="8" fill="#e8324a"/>
<path d="M962 94H968L962 102H968M984 117L987 121L990 117M987 121V125M986 132L992 140M992 132L986 140" stroke="#111" stroke-width="1.1" fill="none"/>
<circle cx="992" cy="183" r="13" fill="#2f2f2f"/><use href="#z" x="992" y="183"/>
<circle cx="992" cy="213" r="13" fill="#2f2f2f"/><use href="#h" x="992" y="213"/>
<circle cx="992" cy="244" r="13" fill="#2f2f2f"/><path d="M985 243h11v7h-11zM997 245l3-1v5l-3-1z" fill="#dcdcdc"/><circle cx="988" cy="240" r="3" fill="#dcdcdc"/><circle cx="994" cy="240" r="3" fill="#dcdcdc"/>
<circle cx="992" cy="275" r="13" fill="#2f2f2f"/><path d="M987 267H997L1001 283H983ZM986 272H998M985 277H999M990 267L988.5 283M994 267L995.5 283" fill="none" stroke="#dcdcdc"/>
<path d="M1013 100L1010 103L1013 106" fill="none" stroke="#aaa"/>
<!-- tools -->
<use href="#sel" x="29" y="105"/><path d="M45 117v-4M41 117h4" stroke="#888"/>
<circle cx="29" cy="139" r="11" fill="none" stroke="#d8c0c0" stroke-width="1.3" stroke-dasharray="7 2"/><path d="M29 132V137M29 141V146M22 139H27M31 139H36" stroke="#999"/>
<use href="#mv" x="28" y="180"/>
<path d="M19 212A10 10 0 0 1 37 212M37 220A10 10 0 0 1 19 220" fill="none" stroke="#e2e2e2" stroke-width="1.1"/><path d="M28 212l4 4-4 4-4-4zM17 212l5 4-5 4zM39 212l-5 4 5 4z" fill="#e2e2e2"/>
<rect x="20" y="241" width="17" height="17" fill="none" stroke="#bfbfbf"/><rect x="19" y="249" width="9" height="9" fill="#e4e4e4"/><path d="M29 248L36 242M32 242H36V246" stroke="#e4e4e4" fill="none"/>
<circle cx="28" cy="283" r="10" fill="none" stroke="#dcdcdc" stroke-dasharray="5 2"/><rect x="23" y="278" width="10" height="10" fill="#efefef"/>
<path d="M20 328L30 315L33 318L23 331Z" fill="#e8e8e8"/><path d="M18 333C24 326 30 340 38 335" fill="none" stroke="#8fc9a0" stroke-width="1.2"/><path d="M45 337v-4M41 337h4" stroke="#888"/>
<path d="M21 347V369H39" fill="none" stroke="#dcdcdc" stroke-width="1.5"/><path d="M23 357C30 357 35 362 37 368H23Z" fill="#7fd0a8"/><path d="M19 371H41" stroke="#dcdcdc" stroke-width="2.4" stroke-dasharray="2 1"/>
<!-- image editor icons -->
<rect x="1033" y="35" width="12" height="12" fill="#d9d9d9"/><path d="M1033 35h3v3h-3zM1039 35h3v3h-3zM1036 38h3v3h-3zM1042 38h3v3h-3zM1033 41h3v3h-3zM1039 41h3v3h-3zM1036 44h3v3h-3zM1042 44h3v3h-3z" fill="#333"/><use href="#ch" x="1050" y="41"/>
<rect x="1173" y="35" width="13" height="13" fill="#dadada"/><path d="M1175 46L1179 38L1184 46Z" fill="#333"/><use href="#ch" x="1190" y="41"/>
<path d="M1324.500 35L1330 37V42C1330 45 1327 47 1324.500 48C1322 47 1319 45 1319 42V37Z" fill="none" stroke="#9a9a9a" stroke-width="1.2"/>
<use href="#cp" x="1345" y="41"/>
<rect x="1360" y="34" width="9" height="7" fill="#cfcfcf"/><rect x="1360" y="42" width="9" height="6" fill="#cfcfcf"/><rect x="1369" y="37" width="3" height="10" fill="#cfcfcf"/>
<use href="#x" x="1384" y="41"/>
<use href="#pin" x="1411" y="41"/>
<rect x="1552" y="35" width="12" height="13" fill="#d9d9d9"/><path d="M1554 46L1558 39L1562 46Z" fill="#333"/><use href="#ch" x="1569" y="41"/>
<circle cx="1562" cy="75" r="13" fill="#333"/><use href="#z" x="1562" y="75"/>
<circle cx="1562" cy="106" r="13" fill="#333"/><use href="#h" x="1562" y="106"/>
<path d="M1018 72L1021 75L1018 78" fill="none" stroke="#888" transform="translate(2)"/><path d="M1582 72L1579 75L1582 78" fill="none" stroke="#888"/>
<path d="M1023 361L1026 365L1023 369" fill="none" stroke="#888"/>
<!-- node header icons -->
<circle cx="1036" cy="331" r="6.5" fill="none" stroke="#d8d8d8" stroke-width="1.3"/><path d="M1034 327A5 5 0 0 0 1034 335" fill="none" stroke="#d8d8d8"/><use href="#ch" x="1050" y="331"/>
<rect x="1068" y="324" width="11" height="14" fill="none" stroke="#cfcfcf" stroke-dasharray="3 2"/><rect x="1071" y="326" width="6" height="10" fill="#e8e8e8"/><use href="#ch" x="1144" y="331"/>
<path d="M1163 325L1172 333L1168 334L1166 338L1163 333L1158 338L1162 332L1159 330L1162 328Z" fill="none" stroke="#888"/>
<path d="M1511 338V325M1507 329L1511 325L1515 329M1511 338H1518" fill="none" stroke="#777" stroke-width="1.2"/>
<path d="M1530 339C1528 331 1530 325 1535 325C1540 325 1541 331 1538 336M1533 337C1532 333 1533 329 1535 329C1538 329 1537 333 1536 335" fill="none" stroke="#c8c8c8" stroke-width="1.2"/>
<path d="M1549 331H1563M1553 325V338M1559 325V338" stroke="#e4e4e4"/><rect x="1549" y="325" width="6" height="6" fill="#e4e4e4"/><use href="#ch" x="1569" y="331"/>
<path d="M1500 352H1507L1503.500 358Z" fill="#c8c8c8"/>
<use href="#sel" x="1518" y="385"/>
<rect x="1506" y="417" width="9" height="9" fill="none" stroke="#eee" stroke-dasharray="2 1.4"/>
<rect x="1525" y="419" width="8" height="7" fill="#d8d8d8"/><rect x="1529" y="416" width="6" height="7" fill="#d8d8d8"/>
<rect x="1543" y="417" width="10" height="9" fill="none" stroke="#ccc" stroke-dasharray="2 1.4"/><rect x="1548" y="416" width="6" height="6" fill="#d8d8d8"/>
<!-- outliner header -->
<path d="M1604 35H1610M1607 35V47M1607 41H1613M1607 47H1613" stroke="#d8d8d8" fill="none" stroke-width="1.2"/><rect x="1612" y="39.500" width="3" height="3" fill="#d8d8d8"/><use href="#ch" x="1619" y="41"/>
<rect x="1640" y="35" width="11" height="11" fill="#d8d8d8"/><rect x="1638" y="37" width="11" height="11" fill="none" stroke="#d8d8d8"/><use href="#ch" x="1658" y="41"/>
<circle cx="1700" cy="38" r="4" fill="none" stroke="#d8d8d8" stroke-width="1.2"/><path d="M1697 41L1693 46" stroke="#d8d8d8" stroke-width="1.4"/>
<path d="M1861 34H1873L1869 41V47L1865 45V41Z" fill="none" stroke="#d8d8d8" stroke-width="1.1"/><use href="#ch" x="1879" y="41"/>
<rect x="1897" y="36" width="10" height="11" fill="none" stroke="#d8d8d8"/><circle cx="1907" cy="35" r="3.4" fill="#d8d8d8"/>
<!-- rows: tree -->
<path d="M1637.500 95V675M1637.500 695V805" stroke="#5e5e5e" fill="none"/>
<path d="M1613 82H1619L1616 88Z M1613 682H1619L1616 688Z" fill="#c4c4c4"/>
<use href="#cl" x="1617" y="65"/><use href="#cl" x="1657" y="85"/><use href="#cl" x="1657" y="685"/>
<rect x="1632" y="79" width="11" height="12" rx="2" fill="#d8d8d8"/><path d="M1634 85L1637 88L1641 81" fill="none" stroke="#222" stroke-width="1.5"/>
<rect x="1632" y="679" width="11" height="12" rx="2" fill="#d8d8d8"/><path d="M1634 685L1637 688L1641 681" fill="none" stroke="#222" stroke-width="1.5"/>
<pattern id="tp" x="1634" y="95" width="20" height="20" patternUnits="userSpaceOnUse"><path d="M4 10H16" stroke="#5e5e5e"/><path d="M0 7L6 10L0 13Z" fill="#c4c4c4"/></pattern>
<rect x="1634" y="95" width="20" height="580" fill="url(#tp)"/>
<rect x="1634" y="695" width="20" height="120" fill="url(#tp)"/>
<!-- restrict columns -->
<use href="#v" x="1881" y="85"/><use href="#r" x="1901" y="85"/><use href="#v" x="1881" y="105"/><use href="#r" x="1901" y="105"/><use href="#v" x="1881" y="125"/><use href="#r" x="1901" y="125"/><use href="#v" x="1881" y="145"/><use href="#r" x="1901" y="145"/><use href="#v" x="1881" y="165"/><use href="#r" x="1901" y="165"/><use href="#v" x="1881" y="185"/><use href="#r" x="1901" y="185"/><use href="#v" x="1881" y="205"/><use href="#r" x="1901" y="205"/><use href="#v" x="1881" y="225"/><use href="#r" x="1901" y="225"/><use href="#v" x="1881" y="245"/><use href="#r" x="1901" y="245"/><use href="#v" x="1881" y="265"/><use href="#r" x="1901" y="265"/><use href="#v" x="1881" y="285"/><use href="#r" x="1901" y="285"/><use href="#v" x="1881" y="305"/><use href="#r" x="1901" y="305"/><use href="#v" x="1881" y="325"/><use href="#r" x="1901" y="325"/><use href="#v" x="1881" y="345"/><use href="#r" x="1901" y="345"/><use href="#v" x="1881" y="365"/><use href="#r" x="1901" y="365"/><use href="#v" x="1881" y="385"/><use href="#r" x="1901" y="385"/><use href="#v" x="1881" y="405"/><use href="#r" x="1901" y="405"/><use href="#v" x="1881" y="425"/><use href="#r" x="1901" y="425"/><use href="#v" x="1881" y="445"/><use href="#r" x="1901" y="445"/><use href="#v" x="1881" y="465"/><use href="#r" x="1901" y="465"/><use href="#v" x="1881" y="485"/><use href="#r" x="1901" y="485"/><use href="#v" x="1881" y="505"/><use href="#r" x="1901" y="505"/><use href="#v" x="1881" y="525"/><use href="#r" x="1901" y="525"/><use href="#v" x="1881" y="545"/><use href="#r" x="1901" y="545"/><use href="#v" x="1881" y="565"/><use href="#r" x="1901" y="565"/><use href="#v" x="1881" y="585"/><use href="#r" x="1901" y="585"/><use href="#v" x="1881" y="605"/><use href="#r" x="1901" y="605"/><use href="#v" x="1881" y="625"/><use href="#r" x="1901" y="625"/><use href="#v" x="1881" y="645"/><use href="#r" x="1901" y="645"/><use href="#v" x="1881" y="665"/><use href="#r" x="1901" y="665"/><use href="#v" x="1881" y="685"/><use href="#r" x="1901" y="685"/><use href="#v" x="1881" y="705"/><use href="#r" x="1901" y="705"/><use href="#v" x="1881" y="725"/><use href="#r" x="1901" y="725"/><use href="#v" x="1881" y="745"/><use href="#r" x="1901" y="745"/><use href="#v" x="1881" y="765"/><use href="#r" x="1901" y="765"/><use href="#v" x="1881" y="785"/><use href="#r" x="1901" y="785"/><use href="#v" x="1881" y="805"/><use href="#r" x="1901" y="805"/>
<!-- object icons -->
<use href="#o" x="1657" y="125"/><use href="#o" x="1657" y="145"/><use href="#o" x="1657" y="165"/><use href="#o" x="1657" y="205"/><use href="#o" x="1657" y="225"/><use href="#o" x="1657" y="245"/><use href="#o" x="1657" y="265"/><use href="#o" x="1657" y="325"/><use href="#o" x="1657" y="345"/><use href="#o" x="1657" y="365"/><use href="#o" x="1657" y="385"/><use href="#o" x="1657" y="405"/><use href="#o" x="1657" y="425"/><use href="#o" x="1657" y="445"/><use href="#o" x="1657" y="465"/><use href="#o" x="1657" y="485"/><use href="#o" x="1657" y="525"/><use href="#o" x="1657" y="545"/><use href="#o" x="1657" y="565"/><use href="#o" x="1657" y="585"/><use href="#o" x="1657" y="605"/><use href="#o" x="1657" y="625"/><use href="#o" x="1657" y="645"/><use href="#o" x="1657" y="665"/><use href="#o" x="1657" y="705"/><use href="#o" x="1657" y="725"/><use href="#o" x="1657" y="745"/><use href="#o" x="1657" y="765"/><use href="#o" x="1657" y="785"/><use href="#o" x="1657" y="805"/>
<!-- camera, probes, sun -->
<path d="M1651 103h11v7h-11zM1663 105l3-1v5l-3-1z" fill="#cf8b55"/><circle cx="1654" cy="100" r="3" fill="none" stroke="#cf8b55" stroke-width="2"/><circle cx="1660" cy="100" r="3" fill="none" stroke="#cf8b55" stroke-width="2"/>
<path d="M1733 103h9v6h-9zM1743 104l3-1v5l-3-1z" fill="none" stroke="#2fa688"/><circle cx="1737" cy="101" r="3" fill="none" stroke="#2fa688"/>
<g stroke="#cf8b55" stroke-width="2"><path d="M1651 184L1656 178M1651 192L1664 178M1656 192L1664 184M1661 192L1664 189"/></g>
<g stroke="#cf8b55" stroke-width="2"><path d="M1651 284L1656 278M1651 292L1664 278M1656 292L1664 284M1661 292L1664 289"/><path d="M1651 304L1656 298M1651 312L1664 298M1656 312L1664 304M1661 312L1664 309"/></g>
<circle cx="1657" cy="502" r="5" fill="#cf8b55"/><path d="M1654 508H1660M1655 510.500H1659" stroke="#cf8b55" stroke-width="1.4"/>
<path d="M1784 180h2v2h-2zM1788 180h2v2h-2zM1792 180h2v2h-2zM1784 184h2v2h-2zM1788 184h2v2h-2zM1792 184h2v2h-2zM1784 188h2v2h-2zM1788 188h2v2h-2zM1792 188h2v2h-2z" fill="#2f9f84"/>
<path d="M1817 282L1820 279H1827V289L1824 292H1817ZM1817 282H1824V292M1824 282L1827 279" fill="none" stroke="#2f9f84"/><rect x="1819.500" y="285" width="2" height="2" fill="#2f9f84"/>
<path d="M1792 302L1795 299H1802V309L1799 312H1792ZM1792 302H1799V312M1799 302L1802 299" fill="none" stroke="#2f9f84"/><rect x="1794.500" y="305" width="2" height="2" fill="#2f9f84"/>
<circle cx="1718.500" cy="505" r="3.500" fill="none" stroke="#2f9f84"/><path d="M1718.500 498V500M1718.500 510V512M1711.500 505H1713.500M1723.500 505H1725.500M1713.500 500L1715 501.500M1722 508.500L1723.500 510M1723.500 500L1722 501.500M1715 508.500L1713.500 510" stroke="#2f9f84"/>
<!-- modifiers and mesh data -->
<use href="#k" x="1741" y="125"/><use href="#m" x="1761" y="125"/><use href="#m" x="1744" y="145"/><use href="#m" x="1760" y="165"/><use href="#k" x="1752" y="205"/><use href="#m" x="1773" y="205"/><use href="#m" x="1754" y="225"/><use href="#m" x="1750" y="245"/><use href="#m" x="1754" y="265"/><use href="#m" x="1723" y="325"/><use href="#m" x="1797" y="345"/><use href="#m" x="1773" y="365"/><use href="#m" x="1796" y="385"/><use href="#m" x="1783" y="405"/><use href="#m" x="1783" y="425"/><use href="#m" x="1783" y="445"/><use href="#m" x="1759" y="465"/><use href="#m" x="1791" y="485"/>
<use href="#k" x="1783" y="525"/><use href="#m" x="1803" y="525"/><use href="#k" x="1783" y="545"/><use href="#m" x="1803" y="545"/><use href="#k" x="1783" y="565"/><use href="#m" x="1803" y="565"/><use href="#k" x="1783" y="585"/><use href="#m" x="1803" y="585"/><use href="#k" x="1783" y="605"/><use href="#m" x="1803" y="605"/><use href="#k" x="1759" y="625"/><use href="#m" x="1779" y="625"/><use href="#k" x="1776" y="645"/><use href="#m" x="1796" y="645"/><use href="#k" x="1778" y="665"/><use href="#m" x="1798" y="665"/><use href="#k" x="1734" y="705"/><use href="#m" x="1754" y="705"/><use href="#k" x="1795" y="725"/><use href="#m" x="1815" y="725"/><use href="#k" x="1783" y="745"/><use href="#m" x="1803" y="745"/><use href="#k" x="1759" y="765"/><use href="#m" x="1779" y="765"/><use href="#k" x="1764" y="785"/><use href="#m" x="1784" y="785"/><use href="#m" x="1718" y="805"/>
<!-- properties icons -->
<rect x="1600" y="860" width="14" height="5" rx="2.500" fill="#e0e0e0"/><rect x="1600" y="868" width="14" height="5" rx="2.500" fill="#e0e0e0"/><use href="#ch" x="1620" y="866"/>
<path d="M1644 872C1642 866 1646 862 1647 859C1648 862 1651 866 1649 872Z" fill="#d8d8d8"/><circle cx="1651" cy="869" r="3.500" fill="none" stroke="#d8d8d8"/><circle cx="1653" cy="860" r="1.600" fill="#d8d8d8"/>
<path d="M1901 860L1908 867L1905 868L1903 871L1901 868L1896 873L1899 867L1896 865L1899 863Z" fill="none" stroke="#8a8a8a"/>
<path d="M1626 887H1633L1629.500 893Z" fill="#b8b8b8"/>
<path d="M1873 887h2v2h-2zM1873 891h2v2h-2zM1873 895h2v2h-2zM1877 888H1885M1877 892H1885M1877 896H1885" stroke="#cfcfcf" fill="none"/>
<path d="M1901 889V891M1904 889V891M1907 889V891M1910 889V891M1901 893V895M1904 893V895M1907 893V895M1910 893V895" stroke="#8a8a8a"/>
<path d="M1604 909V918M1602 905h4v3h-4zM1602 912h4v6h-4zM1610 906L1612 911L1614 906M1612 911V919" stroke="#dedede" fill="none" stroke-width="1.3"/>
<rect x="1596" y="932" width="14" height="11" fill="none" stroke="#d8d8d8" stroke-width="1.4"/><rect x="1599" y="929" width="7" height="3" fill="#d8d8d8"/>
<rect x="1595" y="958" width="15" height="4" fill="#e4e4e4"/><rect x="1595" y="962" width="15" height="5" fill="#c8c8c8"/><path d="M1598 967H1607V974H1598Z" fill="#e4e4e4"/>
<path d="M1596 993V988M1599 993V985M1602 993V982H1609V993Z" fill="none" stroke="#d8d8d8"/>
<path d="M1581 957L1577 961L1581 965" fill="none" stroke="#888"/>
<!-- timeline icons -->
<circle cx="18" cy="935" r="6.500" fill="#e0e0e0"/><path d="M18 935L23 930V940Z" fill="#333"/><use href="#ch" x="33" y="935"/>
<use href="#ch" x="108" y="935"/><use href="#ch" x="167" y="935"/>
<circle cx="719.500" cy="935" r="3.500" fill="#e6e6e6"/>
<path d="M740 930v10M747 930L742 935L747 940Z" fill="#e6e6e6" stroke="#e6e6e6"/>
<path d="M757 935l3-4v8zM763 935l3-4 3 4-3 4z" fill="#e6e6e6"/>
<path d="M787 930v10l-7-5z" fill="#e6e6e6"/><path d="M800 930v10l7-5z" fill="#fff"/>
<path d="M818 935l3-4 3 4-3 4zM826 931l3 4-3 4z" fill="#e6e6e6"/>
<path d="M840 930l5 5-5 5zM846 930v10" fill="#e6e6e6" stroke="#e6e6e6"/>
<circle cx="1384" cy="936" r="5.500" fill="none" stroke="#ddd" stroke-width="1.2"/><path d="M1384 932.500V936L1386 937M1382 929H1386" stroke="#ddd" fill="none"/>
<path d="M5 967L8 970L5 973" fill="none" stroke="#888"/>
<path d="M1581 968L1578 972L1581 976" fill="none" stroke="#888"/>
<!-- ruler ticks -->
<path d="M111.500 970V985M170.500 970V985M229.500 970V985M288.500 970V985M347.500 970V985M406.500 970V985M465.500 970V985M524.500 970V985M583.500 970V985M642.500 970V985M701.500 970V985M760.500 970V985M819.500 970V985M878.500 970V985M937.500 970V985M996.500 970V985M1054.500 970V985M1113.500 970V985M1172.500 970V985M1231.500 970V985M1290.500 970V985M1349.500 970V985M1408.500 970V985M1467.500 970V985" stroke="#2a2a2a"/>
<path d="M82.500 970V985M141.500 970V985M200.500 970V985M259.500 970V985M318.500 970V985M377.500 970V985M436.500 970V985M495.500 970V985M554.500 970V985M613.500 970V985M672.500 970V985M731.500 970V985M790.500 970V985M849.500 970V985M908.500 970V985M967.500 970V985M1026.500 970V985M1085.500 970V985M1144.500 970V985M1203.500 970V985M1262.500 970V985M1320.500 970V985M1379.500 970V985M1438.500 970V985M1497.500 970V985" stroke="#343434"/>
<path d="M1524.500 970V985" stroke="#111"/>
<path d="M58.500 968V992" stroke="#5c8bd6" stroke-width="1"/>
<circle cx="13" cy="989" r="3.500" fill="#585858" stroke="#444"/><circle cx="1571" cy="989" r="3.500" fill="#585858" stroke="#444"/>
<!-- status icons -->
<use href="#ms" x="17" y="1006"/><path d="M13 1002H17V1006H13Z" fill="#c4c4c4"/>
<use href="#ms" x="82" y="1006"/><path d="M82 1000V1005" stroke="#c4c4c4"/><path d="M88 1000C90 1002 90 1004 88 1006" stroke="#c4c4c4" fill="none"/>
<use href="#ms" x="253" y="1006"/><path d="M251.500 1001H254.500V1006H251.500Z" fill="#c4c4c4"/>
<use href="#ms" x="489" y="1006"/><path d="M489 1002H493V1006H489Z" fill="#c4c4c4"/>
</g>
</svg>
</body></html>
